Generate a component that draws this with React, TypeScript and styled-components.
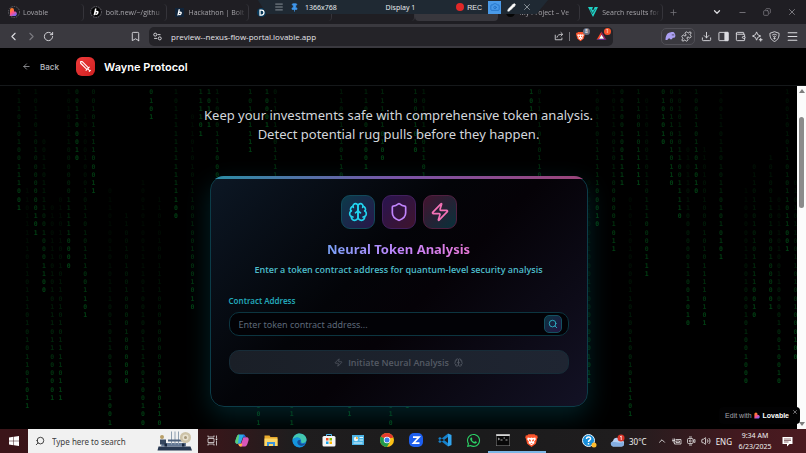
import React from 'react';
import styled, { createGlobalStyle } from 'styled-components';
import {
  ArrowLeft, Bookmark, ChevronDown, ChevronLeft, ChevronRight, ChevronUp, Copy, Download,
  Menu, Minus, Pencil, Pin, Plus, Puzzle, RotateCw, Search, Shield, Wallet, X, Zap, Volume2, Camera,
} from 'lucide-react';
import { FaWhatsapp } from 'react-icons/fa';

const UI = `"Noto Sans", "Open Sans", sans-serif`;

const GlobalStyle = createGlobalStyle`
  * { box-sizing: border-box; }
  html, body, #root { height: 100%; }
  body { margin: 0; background: #000; font-family: ${UI}; overflow: hidden; }
  button, input { font: inherit; color: inherit; margin: 0; }
  button { padding: 0; border: 0; background: none; cursor: pointer; }
  svg { display: block; flex: none; }
`;

const Screen = styled.div`
  position: relative;
  display: flex;
  flex-direction: column;
  height: 100vh;
`;

/* ---------- Browser chrome ---------- */

const TabStrip = styled.div`
  display: flex;
  height: 24px;
  padding-left: 1px;
  background: #1f1e23;
  color: #a5a4a9;
  font-family: "Open Sans", "Noto Sans", sans-serif;
  font-size: 7px;
`;
const Tabs = styled.nav`
  flex: 1;
  display: grid;
  grid-template-columns: repeat(8, minmax(0, 1fr));
  align-items: center;
`;
const Tab = styled.a<{ $active?: boolean }>`
  display: flex;
  align-items: center;
  gap: 3px;
  height: 17px;
  padding: 0 2px 0 6px;
  color: inherit;
  text-decoration: none;
  border-radius: 4px;
  background: ${p => (p.$active ? '#38373d' : 'transparent')};
  border-right: 1px solid ${p => (p.$active ? 'transparent' : '#35343a')};
`;
const TabIcon = styled.span`
  display: grid;
  place-items: center;
  width: 13px;
`;
const TabTitle = styled.span`
  flex: 1;
  overflow: hidden;
  white-space: nowrap;
  mask-image: linear-gradient(to right, #000 80%, transparent);
`;
const WindowButtons = styled.div`
  width: 143px;
  display: flex;
  align-items: center;
  padding: 0 9px 0 6px;
  gap: 16px;
`;
const IconButton = styled.button<{ $tone?: string }>`
  display: grid;
  place-items: center;
  color: ${p => p.$tone ?? '#dcdce0'};
`;
const Spacer = styled.div`flex: 1;`;

const Toolbar = styled.div`
  display: flex;
  align-items: center;
  height: 24px;
  padding: 0 7px;
  background: #3a393f;
`;
const NavButtons = styled.div`
  display: flex;
  align-items: center;
  gap: 5px;
  width: 123px;
`;
const AddressBar = styled.div`
  flex: 1;
  display: flex;
  align-items: center;
  gap: 5px;
  height: 19px;
  margin: 0 48px 0 8px;
  padding: 0 6px 0 4px;
  border-radius: 5px;
  background: #242328;
  color: #dcdce0;
`;
const Address = styled.input`
  flex: 1;
  min-width: 0;
  padding: 0 0 0 4px;
  border: 0;
  outline: 0;
  background: none;
  font-family: "Open Sans", "Noto Sans", sans-serif;
  font-size: 8px;
  color: #e4e4e8;
`;
const Divider = styled.span`
  width: 1px;
  height: 9px;
  background: #77767c;
`;
const Badged = styled.span`
  position: relative;
  display: block;
  & + & { margin-left: 5px; }
`;
const Count = styled.span<{ $tone: string }>`
  position: absolute;
  top: -3px;
  right: -4px;
  width: 7px;
  height: 7px;
  border-radius: 50%;
  background: ${p => p.$tone};
  color: #fff;
  font-size: 5px;
  line-height: 7px;
  text-align: center;
`;
const ExtensionGroup = styled.div`
  display: flex;
  align-items: center;
  justify-content: space-around;
  width: 34px;
  height: 17px;
  border: 1px solid #504f56;
  border-radius: 5px;
`;
const Extensions = styled.div`
  display: flex;
  align-items: center;
  gap: 6px;
`;

const RecorderBar = styled.div`
  position: absolute;
  z-index: 5;
  top: 0;
  left: 32%;
  width: 36%;
  height: 14px;
  display: flex;
  align-items: center;
  gap: 6px;
  padding: 0 16px;
  background: #1f2933;
  clip-path: polygon(0 0, 100% 0, 96% 100%, 3% 100%);
  color: #e6e9ec;
  font-size: 7px;
`;
const RecorderTitle = styled.span`
  flex: 1;
  padding-left: 8px;
  text-align: center;
`;
const RecordButton = styled.button`
  display: flex;
  align-items: center;
  gap: 3px;
  font-family: "Liberation Sans", Arial, sans-serif;
  font-size: 7px;
  &::before {
    content: '';
    width: 8px;
    height: 8px;
    border-radius: 50%;
    background: #e02828;
  }
`;
const CameraButton = styled.button`
  display: grid;
  place-items: center;
  width: 13px;
  height: 13px;
  background: #4a9ae8;
  color: #1f6fc4;
`;

/* ---------- Site ---------- */

const SiteHeader = styled.header`
  display: flex;
  align-items: center;
  height: 38px;
  padding: 0 22px;
  border-bottom: 1px solid #15181a;
  background: #000;
  font-family: Inter, sans-serif;
`;
const BackLink = styled.a`
  display: flex;
  align-items: center;
  gap: 9px;
  margin-right: 17px;
  color: #a9abb0;
  text-decoration: none;
  font-size: 8px;
  font-weight: 600;
`;
const Logo = styled.span`
  display: grid;
  place-items: center;
  width: 19px;
  height: 19px;
  margin-right: 9px;
  border-radius: 6px;
  background: linear-gradient(135deg, #ef3b3b, #cf2020);
  color: #fff;
`;
const Brand = styled.h1`
  margin: 0;
  color: #fff;
  font-size: 11px;
  font-weight: 600;
`;

const Viewport = styled.div`
  flex: 1;
  min-height: 0;
  display: flex;
`;
const Page = styled.main`
  position: relative;
  flex: 1;
  min-width: 0;
  overflow: hidden;
  padding: 0 16px;
  background: #000;
`;
const Rain = styled.svg`
  position: absolute;
  top: 0;
  left: 0;
  width: 100%;
  height: auto;
  font-family: "DejaVu Sans Mono", "Liberation Mono", monospace;
  font-weight: 700;
`;
const Lead = styled.p`
  position: relative;
  margin: 20px 0 32px;
  text-align: center;
  color: #d3d6db;
  font-size: 13px;
  line-height: 19px;
`;
const Card = styled.section`
  position: relative;
  max-width: 378px;
  margin: 0 auto;
  padding: 18px 18px 32px;
  border: 1px solid #0c3c48;
  border-radius: 14px;
  background: linear-gradient(135deg, #0c1724 0%, #030408 40%, #050207 55%, #131225 100%);
  box-shadow: 0 9px 26px rgba(6, 130, 150, 0.26);
  text-align: center;
`;
const CardEdge = styled.div`
  position: absolute;
  inset: -1px;
  border-radius: 14px;
  overflow: hidden;
  pointer-events: none;
  &::before {
    content: '';
    display: block;
    height: 3px;
    background: linear-gradient(to right, #2a8fa6, #7a55a8 50%, #9c4478);
  }
`;
const Tiles = styled.div`
  display: flex;
  justify-content: center;
  gap: 7px;
`;
const Tile = styled.div<{ $from: string; $to: string; $edge: string; $tone: string }>`
  display: grid;
  place-items: center;
  width: 34px;
  height: 34px;
  border: 1px solid ${p => p.$edge};
  border-radius: 9px;
  background: linear-gradient(135deg, ${p => p.$from}, ${p => p.$to});
  color: ${p => p.$tone};
`;
const Title = styled.h2`
  width: fit-content;
  margin: 10px auto 3px;
  background: linear-gradient(to right, #7aa2f8, #c084fc 50%, #e879d8);
  background-clip: text;
  color: transparent;
  font-size: 13px;
  line-height: 20px;
  font-weight: 700;
`;
const Subtitle = styled.p`
  margin: 0 0 17px;
  color: #4dbdcb;
  font-family: "Open Sans", "Noto Sans", sans-serif;
  font-size: 9px;
  line-height: 16px;
  font-weight: 600;
`;
const Form = styled.form`
  display: flex;
  flex-direction: column;
  text-align: left;
`;
const FieldLabel = styled.label`
  margin-bottom: 5px;
  color: #22a6b8;
  font-size: 8px;
  line-height: 12px;
  font-weight: 600;
`;
const Field = styled.div`
  display: flex;
  align-items: center;
  height: 24px;
  margin-bottom: 14px;
  padding: 0 6px 0 9px;
  border: 1px solid #0c3540;
  border-radius: 10px;
  background: #020206;
`;
const TokenInput = styled.input`
  flex: 1;
  min-width: 0;
  padding: 0;
  border: 0;
  outline: 0;
  background: none;
  color: #dfe3ea;
  font-size: 9px;
  &::placeholder { color: #5d6878; opacity: 1; }
`;
const SearchButton = styled.button`
  display: grid;
  place-items: center;
  width: 18px;
  height: 18px;
  border: 1px solid #145060;
  border-radius: 5px;
  background: linear-gradient(135deg, #0b3442, #251442);
  color: #30bdd0;
`;
const SubmitButton = styled.button`
  display: flex;
  align-items: center;
  justify-content: center;
  gap: 5px;
  height: 24px;
  border: 1px solid #172c38;
  border-radius: 10px;
  background: linear-gradient(to right, #1a1f27, #1f2532);
  color: #545a64;
  font-family: "Open Sans", "Noto Sans", sans-serif;
  font-size: 9px;
  font-weight: 600;
`;

const ScrollTrack = styled.div`
  display: flex;
  flex-direction: column;
  align-items: center;
  width: 9px;
  padding: 3px 0;
  background: #fbfbfb;
`;
const ScrollThumb = styled.div`
  flex: 0 0 27%;
  width: 5px;
  margin-top: 24px;
  border-radius: 3px;
  background: #8b8b8b;
`;
const ScrollArrow = styled.span<{ $down?: boolean }>`
  width: 0;
  height: 0;
  border: 3px solid transparent;
  ${p => (p.$down ? 'border-top: 4px solid #7d7d7d; border-bottom: 0;' : 'border-bottom: 4px solid #7d7d7d; border-top: 0;')}
`;
const MadeWith = styled.div`
  position: absolute;
  z-index: 4;
  right: 6px;
  bottom: 29px;
  display: flex;
  align-items: center;
  height: 17px;
  padding: 0 2px 0 6px;
  gap: 3px;
  border-radius: 4px;
  background: #020203;
  color: #a3a5ab;
  font-family: "Liberation Sans", Arial, sans-serif;
  font-size: 7px;
  a { display: flex; align-items: center; gap: 2px; color: inherit; text-decoration: none; }
  strong { color: #fff; font-size: 7px; }
  button { align-self: flex-start; padding-top: 2px; }
`;

/* ---------- Taskbar ---------- */

const Taskbar = styled.footer`
  display: flex;
  height: 24px;
  background: linear-gradient(to right, #3b1519 0, #36171a 27%, #1f1d1e 36%, #1b1b1c 60%, #1f1d1e 76%, #43191f 92%, #4a1a20 100%);
  color: #f1f1f1;
`;
const StartButton = styled.button`
  width: 28px;
  display: grid;
  place-items: center;
`;
const SearchBox = styled.label`
  display: flex;
  align-items: center;
  gap: 7px;
  width: 170px;
  padding: 0 5px 0 7px;
  background: #f1f1f1;
  color: #222;
  input {
    flex: 1;
    min-width: 0;
    padding: 0;
    border: 0;
    outline: 0;
    background: none;
    font-size: 8px;
  }
  input::placeholder { color: #3c3c3c; opacity: 1; }
`;
const Apps = styled.div`
  flex: 1;
  display: flex;
`;
const AppButton = styled.button<{ $open?: boolean }>`
  width: 29px;
  display: grid;
  place-items: center;
  border-bottom: 2px solid ${p => (p.$open ? '#7db7e6' : 'transparent')};
  background-clip: padding-box;
`;
const Tray = styled.div`
  display: flex;
  align-items: center;
  gap: 5px;
  padding-right: 13px;
  font-size: 8px;
`;
const Weather = styled.button`
  display: flex;
  align-items: center;
  gap: 4px;
  margin: 0 5px 0 8px;
`;
const Clock = styled.time`
  width: 36px;
  margin-right: 4px;
  text-align: center;
  white-space: nowrap;
  font-size: 7px;
  line-height: 11px;
`;

/* Column index, last lit row, digits that end at that row. */
const COLUMNS: [number, number, string][] = [
  [2, 14, '111010100111001'], [3, 38, '110111110110111010101101011'],
  [4, 17, '101101010000000101'], [5, 24, '0011011110010001100'],
  [6, 37, '010011101010111011000001'], [7, 37, '0110110010110101011110111'],
  [8, 21, '1010111000000111110000'], [9, 8, '001100010'],
  [10, 27, '1010010001011010111001101'], [11, 12, '0010111100011'],
  [13, 40, '01101001010111001011010001001'], [15, 35, '110010100100001000000'],
  [17, 40, '100101001111010010011110100100'], [18, 3, '0101'],
  [19, 40, '1101010011110000000010010110'], [21, 15, '1011111111111100'],
  [23, 26, '011010101110010010001010'], [24, 5, '111101'], [25, 4, '10111'],
  [26, 12, '1101011100000'], [30, 7, '10101111'], [31, 40, '10110110110101001101011001'],
  [32, 4, '10001'], [33, 14, '011010011110010'], [35, 40, '101011001101011'],
  [41, 13, '11011010110101'], [42, 39, '10110010111'], [44, 9, '1101011001'],
  [46, 8, '111010100'], [47, 40, '11010011010'], [49, 38, '101101011'], [50, 7, '10011010'],
  [51, 12, '1010110110101'], [64, 2, '101'], [65, 14, '011110101100101'],
  [71, 35, '0101100110001100000001011'], [72, 16, '10011011111100010'],
  [74, 19, '10111001011000001011'], [75, 11, '001001001111'],
  [76, 39, '010110100001101001001011101'], [77, 11, '111001011111'],
  [78, 22, '0110100101101110000111'], [80, 6, '0101010'], [81, 11, '000110010110'],
  [82, 15, '1010110110011110'], [83, 28, '0101101100000011001010'],
  [84, 12, '1001101101010'], [85, 28, '1101001000101011110101'],
  [87, 20, '100110110101101010101'], [90, 35, '110000011001000101001000'],
  [91, 27, '0110110101011110010'], [93, 26, '1010011010001000001'],
  [94, 35, '01011010011000010010010'], [95, 19, '10010101101011011001'],
  [96, 32, '0101011001101001000100'],
];

const DigitRain = () => (
  <Rain viewBox="0 0 1351 584" aria-hidden="true">
    {COLUMNS.map(([col, end, digits]) => (
      <g key={col} fontSize={11} fill="#009a2e">
        {[...digits].map((d, i) => {
          const age = digits.length - 1 - i;
          return (
            <text key={i} x={col * 14 + 1} y={(end - age) * 14 + 14} opacity={Math.max(0.07, 0.42 * 0.925 ** age)}>{d}</text>
          );
        })}
      </g>
    ))}
  </Rain>
);

const BrainIcon = ({ size, width = 2 }: { size: number; width?: number }) => (
  <svg width={size} height={size} viewBox="0 0 24 24" fill="none" stroke="currentColor" strokeWidth={width} strokeLinecap="round" strokeLinejoin="round">
    <path d="M12 5a3 3 0 1 0-5.997.125 4 4 0 0 0-2.526 5.77 4 4 0 0 0 .556 6.588A4 4 0 1 0 12 18Z" />
    <path d="M12 5a3 3 0 1 1 5.997.125 4 4 0 0 1 2.526 5.77 4 4 0 0 1-.556 6.588A4 4 0 1 1 12 18Z" />
    <path d="M15 13a4.5 4.5 0 0 1-3-4 4.5 4.5 0 0 1-3 4M17.599 6.5a3 3 0 0 0 .399-1.375M6.003 5.125A3 3 0 0 0 6.401 6.5M3.477 10.896a4 4 0 0 1 .585-.396M19.938 10.5a4 4 0 0 1 .585.396M6 18a4 4 0 0 1-1.967-.516M19.967 17.484A4 4 0 0 1 18 18" />
  </svg>
);

const SwordIcon = () => (
  <svg width="13" height="13" viewBox="0 0 24 24" fill="none" stroke="currentColor" strokeWidth="2" strokeLinecap="round" strokeLinejoin="round">
    <path d="M14.500 17.500 3 6V3h3l11.500 11.500M13 19l6-6M16 16l4 4M19 21l2-2" />
  </svg>
);

const HeartMark = ({ size, ring }: { size: number; ring?: boolean }) => (
  <svg width={size} height={size} viewBox={ring ? '0 0 24 24' : '3 3 18 18'}>
    <defs>
      <linearGradient id="heart" x1="0.1" y1="0" x2="0.7" y2="1">
        <stop offset="0.25" stopColor="#ff7a2e" /><stop offset="0.55" stopColor="#ff4f8b" /><stop offset="1" stopColor="#6f6bff" />
      </linearGradient>
    </defs>
    {ring && <circle cx="12" cy="12" r="11" fill="none" stroke="#77767c" strokeWidth="1.5" strokeDasharray="3 2" />}
    <path d="M4 8a4 4 0 0 1 8 0v3h3a5 5 0 0 1 0 9H4Z" fill="url(#heart)" />
  </svg>
);

const BoltMark = ({ round }: { round?: boolean }) => (
  <svg width={round ? 12 : 9} height={round ? 12 : 9} viewBox={round ? '0 0 24 24' : '2 2 20 20'}>
    {round
      ? <><circle cx="12" cy="12" r="11" fill="none" stroke="#77767c" strokeWidth="1.5" strokeDasharray="3 2" /><circle cx="12" cy="12" r="9" fill="#000" /></>
      : <rect x="2" y="2" width="20" height="20" fill="#10243a" />}
    <path d="M10 5h3l-1 5c4-1 6 1 5 4-1 4-5 5-7 3l-.5 1.500H7Zm1.500 8-.5 2c1 1 2.500.5 3-1s-1-2-2.500-1Z" fill="#fff" fillRule="evenodd" />
  </svg>
);

const BraveLion = ({ size }: { size: number }) => (
  <svg width={size} height={size} viewBox="0 0 24 24">
    <path d="M7 2h10l2 2 2-.3 1 3.300-1 2-2 8-7 5.500L5 17 3 9 2 7l1-3.300 2 .3Z" fill="#fb542b" />
    <path d="m6 7 4 1 2-1 2 1 4-1 1 3-3 4 1 2-5 3.500L7 16l1-2-3-4Z" fill="#fff" />
    <path d="m8 10 3 1-.5 3L8 12Zm8 0-3 1 .5 3 2.500-2Zm-6 6h4l-2 1.500Z" fill="#fb542b" />
  </svg>
);

const TuneIcon = () => (
  <svg width="9" height="9" viewBox="0 0 24 24" fill="none" stroke="currentColor" strokeWidth="2.500">
    <circle cx="6" cy="7" r="4" /><path d="M12 7h8M3 17h8" /><circle cx="18" cy="17" r="4" />
  </svg>
);

const ShareIcon = () => (
  <svg width="10" height="10" viewBox="0 0 24 24" fill="none" stroke="currentColor" strokeWidth="2">
    <path d="M3 9v12h16v-5M7 16c1-6 5-8 13-8M16 3l5 5-5 5" />
  </svg>
);

const BatTriangle = () => (
  <svg width="11" height="10" viewBox="0 0 24 22">
    <path d="M12 1 12 8 6.500 17 1 20Z" fill="#ff4724" /><path d="m12 1 11 19-5.500-3L12 8Z" fill="#9e1f63" />
    <path d="m1 20 5.500-3h11l5.500 3Z" fill="#662d91" /><path d="m12 8 5.500 9h-11Z" fill="#fff" />
  </svg>
);

const Elephant = () => (
  <svg width="11" height="10" viewBox="0 0 24 22">
    <path d="M1 20c0-9 4-17 12-17 3-2 7-1 8 2 3 4 2 9-1 10h-3l-2 3h-4l-1-2-3 1-2 3Z" fill="#ab9ff2" />
    <path d="M16 7v3M19 7v3" stroke="#3a393f" strokeWidth="1.500" />
  </svg>
);

const SparkleIcon = () => (
  <svg width="11" height="11" viewBox="0 0 24 24" fill="none" stroke="currentColor" strokeWidth="2" strokeLinejoin="round">
    <path d="m10 2 2.500 6 6.500 3-6.500 3L10 20l-2.500-6L1 11l6.500-3Z" /><path d="m19 15 1 3 3 1-3 1-1 3-1-3-3-1 3-1Z" fill="currentColor" strokeWidth="1" />
  </svg>
);

const VpnIcon = () => (
  <svg width="11" height="11" viewBox="0 0 24 24" fill="none" stroke="currentColor" strokeWidth="2">
    <path d="M12 1.500 22 5c0 9-2 14-10 18C4 19 2 14 2 5Z" /><path d="M7 9c3-2.500 7-2.500 10 0M9 12.500c2-1.500 4-1.500 6 0" /><circle cx="12" cy="16" r="1.500" fill="currentColor" />
  </svg>
);

const SidebarIcon = () => (
  <svg width="11" height="11" viewBox="0 0 24 24" fill="none" stroke="currentColor" strokeWidth="2">
    <rect x="2" y="3" width="20" height="18" rx="1" /><path d="M15 3h7v18h-7Z" fill="currentColor" />
  </svg>
);

const WindowsLogo = () => (
  <svg width="10" height="10" viewBox="0 0 20 20" fill="#fff">
    <path d="M0 3 9 1.700v7.800H0ZM10 1.500 20 0v9.500H10ZM0 10.500h9v7.800L0 17ZM10 10.500h10V20l-10-1.500Z" />
  </svg>
);

const SewingMachine = () => (
  <svg width="36" height="20" viewBox="0 0 72 40">
    <path d="M3 31h64l3 8H1Z" fill="#273750" /><path d="M10 24h48v7H8Z" fill="#647894" />
    <path d="M6 17h12v10H6Z" fill="#34465f" /><circle cx="10" cy="12" r="4" fill="#b89f68" />
    <path d="M29 1v26M36 1v26M43 1v26" stroke="#8f9fb0" strokeWidth="2" /><path d="M22 17h32v4H22Z" fill="#4d617c" />
    <circle cx="57" cy="13" r="11" fill="#cdc3a8" /><circle cx="57" cy="13" r="6" fill="#e8e2d0" /><circle cx="57" cy="13" r="3" fill="#a5977a" />
    <path d="M15 31v-6h5v6M50 31v-6h5v6" fill="#18273d" />
  </svg>
);

const TaskViewIcon = () => (
  <svg width="11" height="11" viewBox="0 0 22 22" fill="none" stroke="#eee" strokeWidth="1.500">
    <path d="M2 7h12v8H2ZM2 1v3h12V1M2 21v-3h12v3M19 1v5M19 11v10" /><rect x="17.500" y="7" width="3" height="3" fill="#eee" stroke="none" />
  </svg>
);

const CopilotIcon = () => (
  <svg width="14" height="13" viewBox="0 0 30 28">
    <path d="M9 1h9c3 0 4 3 5 6h-6l-5 14H6c-5 0-7-3-4-10C4 5 5 1 9 1Z" fill="#29a9e8" />
    <path d="M2 11c2-6 3-10 7-10l-3 20c-5 0-7-3-4-10Z" fill="#5fcf72" />
    <path d="M12 27h9c4 0 5-4 7-10 3-7 1-10-4-10h-6l-5 14H7c1 3 2 6 5 6Z" fill="#d856b9" />
    <path d="M7 21h9l-2 6h-2c-3 0-4-3-5-6Z" fill="#ffb040" /><path d="M18 1c3 0 4 3 5 6h-6l2-6Z" fill="#265ed8" />
  </svg>
);

const FolderIcon = () => (
  <svg width="14" height="13" viewBox="0 0 28 26">
    <path d="M1 3h10l2 3h14v18H1Z" fill="#e8a92c" /><path d="M1 9h26v15H1Z" fill="#fcd667" /><path d="M6 24v-8h16v8h-4v-4h-8v4Z" fill="#3d94dc" />
  </svg>
);

const EdgeIcon = () => (
  <svg width="15" height="15" viewBox="0 0 30 30">
    <circle cx="15" cy="15" r="14" fill="#1479ce" />
    <path d="M1 14C2 6 8 1 15 1c8 0 14 6 14 12 0 5-4 8-9 7-3-1-1-3-2-6-2-6-12-7-17 0Z" fill="#43c7b0" />
    <path d="M1 15c4-8 15-8 17-1-5-2-8 2-7 6 1 5 7 7 13 4-6 8-22 5-23-9Z" fill="#1596de" />
    <path d="M17 14c-5-1-7 3-6 6 2 6 9 7 14 3l1-2c-5 2-12 1-9-7Z" fill="#164f96" />
  </svg>
);

const StoreIcon = () => (
  <svg width="14" height="14" viewBox="0 0 28 28">
    <path d="M9 8V3h10v5" fill="none" stroke="#50b9ef" strokeWidth="2" /><rect x="1" y="6" width="26" height="21" rx="3" fill="#f5f5f5" />
    <path d="M8 10h5v5H8Z" fill="#f04e23" /><path d="M15 10h5v5h-5Z" fill="#7fba00" /><path d="M8 17h5v5H8Z" fill="#18a4ea" /><path d="M15 17h5v5h-5Z" fill="#ffb900" />
  </svg>
);

const PanelIcon = () => (
  <svg width="12" height="10" viewBox="0 0 24 20">
    <rect width="24" height="20" fill="#4bb4e6" /><circle cx="8" cy="8" r="4.500" fill="#e8f6ff" /><path d="M8 8V3a5 5 0 0 1 4 5Z" fill="#f2b33d" />
    <path d="M15 4h7v2h-7ZM15 9h7v2h-7ZM3 15h18v2H3Z" fill="#dff3fd" />
  </svg>
);

const ChromeIcon = () => (
  <svg width="14" height="14" viewBox="0 0 28 28">
    <circle cx="14" cy="14" r="14" fill="#fbc116" /><path d="M14 14 1.900 7A14 14 0 0 1 26.100 7Z" fill="#e33b2e" />
    <path d="M14 14 1.900 7A14 14 0 0 0 14 28l6-10.500Z" fill="#229a4c" /><path d="M14 7h12.100l-1 3H14Z" fill="#e33b2e" />
    <circle cx="14" cy="14" r="6.500" fill="#fff" /><circle cx="14" cy="14" r="5" fill="#3b7ded" />
  </svg>
);

const ZIcon = () => (
  <svg width="14" height="14" viewBox="0 0 28 28">
    <rect width="28" height="28" rx="10" fill="#1d5ff0" /><path d="M8 8h12L9 20h12" fill="none" stroke="#fff" strokeWidth="3.500" />
  </svg>
);

const CodeIcon = () => (
  <svg width="14" height="14" viewBox="0 0 28 28">
    <path d="m20 1 7 3v20l-7 3Z" fill="#31a5ef" /><path d="M20 8 4 20l-3-2v-2L20 1ZM20 20 4 8l-3 2v2l19 15Z" fill="#1681cb" />
  </svg>
);

const TerminalIcon = () => (
  <svg width="14" height="12" viewBox="0 0 28 24">
    <rect width="28" height="24" fill="#8d8d8d" /><rect x="1" y="4" width="26" height="19" fill="#080808" /><path d="M1 1h26v3H1Z" fill="#d8d8d8" />
    <path d="m4 8 3 2-3 2M9 12h4M15 8h3M19 12h4" stroke="#ddd" strokeWidth="1.500" fill="none" />
  </svg>
);

const HelpIcon = () => (
  <svg width="15" height="14" viewBox="0 0 30 28">
    <circle cx="13" cy="13" r="12" fill="#178fda" stroke="#eaf6ff" strokeWidth="2" />
    <path d="M9 10c0-6 9-5 8 0-1 3-4 2-4 6M13 18v3" fill="none" stroke="#fff" strokeWidth="3" /><circle cx="24" cy="22" r="5" fill="#ffbd2f" />
  </svg>
);

const CloudIcon = () => (
  <svg width="15" height="14" viewBox="0 0 30 28">
    <path d="M6 25a6 6 0 0 1 0-11c1-8 12-9 14-2 7-1 9 3 8 8 0 3-2 5-5 5Z" fill="#b6d1f3" /><path d="M6 25a6 6 0 0 1-4-8c8-3 15 3 24-1l2 4c0 3-2 5-5 5Z" fill="#83aee2" />
    <circle cx="22" cy="8" r="7" fill="#d83428" /><path d="m20 6 2.500-2v8" stroke="#fff" strokeWidth="1.500" fill="none" />
  </svg>
);

const BatteryIcon = () => (
  <svg width="10" height="9" viewBox="0 0 20 18" fill="none" stroke="currentColor" strokeWidth="1.500">
    <path d="M7 5h11v9H5v-3M2 3v4M5 3v4M1 7h5v2L3.500 11Z" /><path d="M8 8h7v3H8Z" />
  </svg>
);

const MeetIcon = () => (
  <svg width="9" height="10" viewBox="0 0 18 20" fill="none" stroke="currentColor" strokeWidth="1.500">
    <rect x="1" y="5" width="11" height="10" rx="2" /><path d="m12 9 4-2v6l-4-2M4 2h6M4 18h6" /><circle cx="6.500" cy="10" r="2" />
  </svg>
);

const NoteIcon = () => (
  <svg width="11" height="11" viewBox="0 0 22 22">
    <path d="M1 2h20v14h-6l-5 5v-5H1Z" fill="#fff" /><path d="M4 6h14M4 9h14M4 12h9" stroke="#4a1a20" strokeWidth="1.200" />
  </svg>
);

const TealMark = () => (
  <svg width="10" height="10" viewBox="0 0 18 18">
    <path d="M0 0h9L7 5h3l2-5h6L9 18Z" fill="#1fd0c4" /><path d="m4 4 4 8 5-8" fill="none" stroke="#1f1e23" strokeWidth="1" />
  </svg>
);

const DMark = () => (
  <svg width="9" height="9" viewBox="0 0 18 18">
    <circle cx="9" cy="9" r="9" fill="#08395a" /><path d="M6 4h3a5 5 0 0 1 0 10H6Z" fill="none" stroke="#fff" strokeWidth="2.500" />
  </svg>
);

const TABS: { name: string; title?: string; icon?: React.ReactNode; active?: boolean }[] = [
  { name: 'Lovable', title: 'Lovable', icon: <HeartMark size={12} ring /> },
  { name: 'Bolt', title: 'bolt.new/~/githu', icon: <BoltMark round /> },
  { name: 'Hackathon', title: 'Hackathon | Bolt', icon: <BoltMark /> },
  { name: 'Devpost', icon: <DMark /> },
  { name: 'Background tab' },
  { name: 'Wayne Protocol', active: true },
  { name: 'Project', title: 'My Project – Ve', icon: <svg width="9" height="9"><circle cx="4.500" cy="4.500" r="4.500" fill="#050505" /></svg> },
  { name: 'Search', title: 'Search results for', icon: <TealMark /> },
];

const APPS: [string, React.ReactNode, boolean?][] = [
  ['Task view', <TaskViewIcon />], ['Copilot', <CopilotIcon />], ['File Explorer', <FolderIcon />],
  ['Edge', <EdgeIcon />], ['Store', <StoreIcon />], ['Control panel', <PanelIcon />],
  ['Chrome', <ChromeIcon />], ['Z', <ZIcon />], ['Code', <CodeIcon />],
  ['WhatsApp', <FaWhatsapp size={15} color="#2bd366" />], ['Terminal', <TerminalIcon />, true], ['Brave', <BraveLion size={15} />, true],
];

export default function App() {
  return (
    <Screen>
      <GlobalStyle />
      <TabStrip>
        <Tabs aria-label="Tabs">
          {TABS.map(t => (
            <Tab key={t.name} href="#" aria-label={t.name} $active={t.active}>
              <TabIcon>{t.icon}</TabIcon>
              {t.title && <TabTitle>{t.title}</TabTitle>}
            </Tab>
          ))}
        </Tabs>
        <WindowButtons>
          <IconButton aria-label="New tab" $tone="#77767c"><Plus size={9} /></IconButton>
          <Spacer />
          <IconButton aria-label="Search tabs"><ChevronDown size={10} strokeWidth={3} /></IconButton>
          <IconButton aria-label="Minimise" $tone="#8b8a90"><Minus size={9} /></IconButton>
          <IconButton aria-label="Restore" $tone="#8b8a90"><Copy size={8} transform="scale(-1 1)" /></IconButton>
          <IconButton aria-label="Close" $tone="#8b8a90"><X size={10} /></IconButton>
        </WindowButtons>
      </TabStrip>

      <RecorderBar>
        <IconButton aria-label="Recorder menu" $tone="#9aa3ab"><Menu size={10} /></IconButton>
        <IconButton aria-label="Pin" $tone="#3f97ec"><Pin size={9} fill="currentColor" /></IconButton>
        <span>1366x768</span>
        <RecorderTitle>Display 1</RecorderTitle>
        <RecordButton>REC</RecordButton>
        <CameraButton aria-label="Screenshot"><Camera size={10} /></CameraButton>
        <IconButton aria-label="Draw" $tone="#fff"><Pencil size={9} fill="currentColor" /></IconButton>
        <IconButton aria-label="Close recorder" $tone="#9aa3ab"><X size={10} /></IconButton>
      </RecorderBar>

      <Toolbar>
        <NavButtons>
          <IconButton aria-label="Back"><ChevronLeft size={13} /></IconButton>
          <IconButton aria-label="Forward" $tone="#7b7a80"><ChevronRight size={13} /></IconButton>
          <IconButton aria-label="Reload"><RotateCw size={11} /></IconButton>
        </NavButtons>
        <IconButton aria-label="Bookmark"><Bookmark size={11} /></IconButton>
        <AddressBar>
          <TuneIcon />
          <Address aria-label="Address" defaultValue="preview--nexus-flow-portal.lovable.app" />
          <ShareIcon />
          <Divider />
          <Badged><BraveLion size={11} /><Count $tone="#6b7080">8</Count></Badged>
          <Badged><BatTriangle /><Count $tone="#fb542b">1</Count></Badged>
        </AddressBar>
        <Extensions>
          <ExtensionGroup>
            <IconButton aria-label="Phantom"><Elephant /></IconButton>
            <IconButton aria-label="Extensions"><Puzzle size={11} /></IconButton>
          </ExtensionGroup>
          <IconButton aria-label="Downloads"><Download size={11} /></IconButton>
          <IconButton aria-label="Sidebar"><SidebarIcon /></IconButton>
          <IconButton aria-label="Wallet"><Wallet size={11} /></IconButton>
          <IconButton aria-label="Assistant"><SparkleIcon /></IconButton>
          <IconButton aria-label="VPN"><VpnIcon /></IconButton>
          <IconButton aria-label="Menu"><Menu size={13} /></IconButton>
        </Extensions>
      </Toolbar>

      <SiteHeader>
        <BackLink href="#"><ArrowLeft size={9} />Back</BackLink>
        <Logo><SwordIcon /></Logo>
        <Brand>Wayne Protocol</Brand>
      </SiteHeader>

      <Viewport>
        <Page>
          <DigitRain />
          <Lead>
            Keep your investments safe with comprehensive token analysis.<br />
            Detect potential rug pulls before they happen.
          </Lead>
          <Card>
            <CardEdge />
            <Tiles>
              <Tile $from="#0b3b4a" $to="#28164a" $edge="#12495a" $tone="#22d3ee"><BrainIcon size={20} /></Tile>
              <Tile $from="#291450" $to="#3f142c" $edge="#42205e" $tone="#c084fc"><Shield size={20} /></Tile>
              <Tile $from="#43132f" $to="#07313a" $edge="#4f2040" $tone="#f472b6"><Zap size={20} /></Tile>
            </Tiles>
            <Title>Neural Token Analysis</Title>
            <Subtitle>Enter a token contract address for quantum-level security analysis</Subtitle>
            <Form onSubmit={e => e.preventDefault()}>
              <FieldLabel htmlFor="contract">Contract Address</FieldLabel>
              <Field>
                <TokenInput id="contract" placeholder="Enter token contract address..." />
                <SearchButton type="button" aria-label="Search"><Search size={10} /></SearchButton>
              </Field>
              <SubmitButton type="submit" disabled>
                <Zap size={9} />Initiate Neural Analysis<BrainIcon size={9} />
              </SubmitButton>
            </Form>
          </Card>
        </Page>
        <ScrollTrack>
          <ScrollArrow />
          <ScrollThumb />
          <Spacer />
          <ScrollArrow $down />
        </ScrollTrack>
      </Viewport>

      <MadeWith>
        <a href="#">Edit with <HeartMark size={7} /><strong>Lovable</strong></a>
        <IconButton aria-label="Dismiss"><X size={6} /></IconButton>
      </MadeWith>

      <Taskbar>
        <StartButton aria-label="Start"><WindowsLogo /></StartButton>
        <SearchBox>
          <Search size={10} transform="scale(-1 1)" />
          <input placeholder="Type here to search" aria-label="Type here to search" />
          <SewingMachine />
        </SearchBox>
        <Apps>
          {APPS.map(([name, icon, open]) => (
            <AppButton key={name} aria-label={name} $open={open}>{icon}</AppButton>
          ))}
        </Apps>
        <Tray>
          <IconButton aria-label="Help"><HelpIcon /></IconButton>
          <Weather><CloudIcon />30°C</Weather>
          <ChevronUp size={10} />
          <BatteryIcon />
          <MeetIcon />
          <Volume2 size={10} />
          <span>ENG</span>
          <Clock>9:34 AM<br />6/23/2025</Clock>
          <IconButton aria-label="Notifications"><NoteIcon /></IconButton>
        </Tray>
      </Taskbar>
    </Screen>
  );
}
